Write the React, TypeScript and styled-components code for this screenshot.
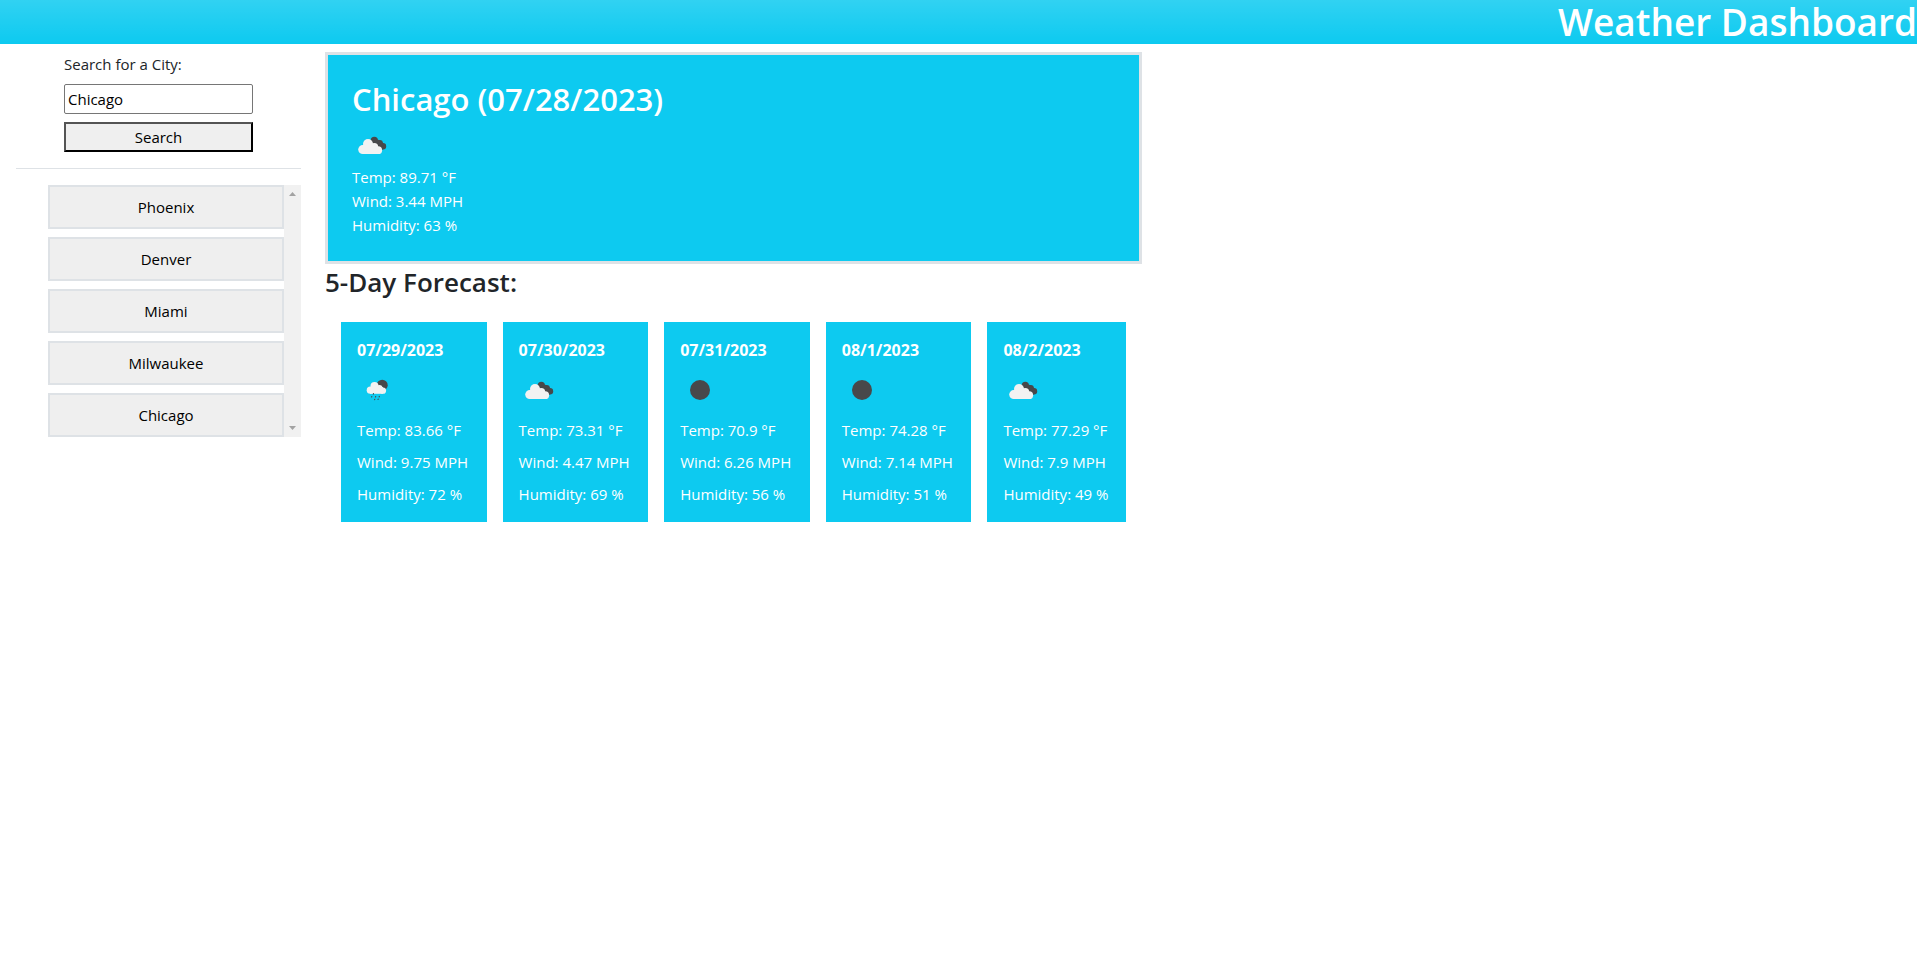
import React, { useState } from "react";
import styled, { createGlobalStyle } from "styled-components";

const GlobalStyle = createGlobalStyle`
  *, *::before, *::after { box-sizing: border-box; }
  body {
    margin: 0;
    background: #fff;
    color: #212529;
    font-family: "Segoe UI", "Open Sans", "Noto Sans", sans-serif;
    font-size: 15px;
    line-height: 24px;
  }
  h1, h2, h3, h4, p { margin: 0; }
`;

const Header = styled.header`
  display: flex;
  justify-content: flex-end;
  background: linear-gradient(180deg, rgba(255, 255, 255, 0.15), rgba(255, 255, 255, 0)) #0dcaf0;
`;

const Title = styled.h1`
  color: #fff;
  font-size: 37px;
  font-weight: 600;
  line-height: 44px;
  white-space: nowrap;
`;

const Layout = styled.div`
  display: flex;
  align-items: flex-start;
  gap: 24px;
  padding: 8px 16px;
`;

const Sidebar = styled.aside`
  flex: 0 0 285px;
`;

const SearchForm = styled.form`
  display: flex;
  flex-direction: column;
  gap: 8px;
  padding: 0 48px 16px;
`;

const SearchInput = styled.input`
  width: 100%;
  height: 30px;
  padding: 0 3px;
  border: 1px solid #767676;
  border-radius: 2px;
  background: #fff;
  color: #000;
  font: inherit;
`;

const SearchButton = styled.button`
  height: 30px;
  padding: 0;
  border: 2px outset #000;
  background: #efefef;
  color: #000;
  font: inherit;
`;

const History = styled.div`
  display: flex;
  margin-top: 16px;
  padding-left: 32px;
`;

const Divider = styled.hr`
  height: 1px;
  margin: 0;
  border: 0;
  background: #dee2e6;
`;

const CityList = styled.div`
  display: flex;
  flex: 1;
  flex-direction: column;
  gap: 8px;
`;

const CityButton = styled.button`
  height: 44px;
  border: 2px solid #dee2e6;
  background: #efefef;
  color: #000;
  font: inherit;
`;

const ScrollTrack = styled.div`
  display: flex;
  flex-direction: column;
  justify-content: space-between;
  width: 17px;
  background: #f1f1f1;
  svg { display: block; }
`;

const Main = styled.main`
  flex: 0 1 817px;
  min-width: 0;
`;

const Today = styled.section`
  padding: 24px;
  border: 3px solid #dee2e6;
  background: #0dcaf0;
  color: #fff;
`;

const TodayTitle = styled.h2`
  margin-bottom: 6px;
  font-size: 31px;
  font-weight: 600;
  line-height: 40px;
`;

const ForecastTitle = styled.h3`
  font-size: 26px;
  font-weight: 600;
  line-height: 36px;
`;

const Forecast = styled.div`
  display: grid;
  grid-template-columns: repeat(4, 146fr) 139fr;
  gap: 16px;
  padding: 22px 16px 16px;
`;

const DayCard = styled.article`
  display: flex;
  flex-direction: column;
  gap: 8px;
  padding: 16px;
  background: #0dcaf0;
  color: #fff;
  white-space: nowrap;
`;

const DayDate = styled.h4`
  font-size: 16px;
  font-weight: 700;
  line-height: 24px;
`;

const Picture = styled.svg`
  display: block;
  width: 40px;
  height: 40px;
`;

type Sky = "clouds" | "rain" | "clear";

function SkyIcon({ sky }: { sky: Sky }) {
  if (sky === "clear") {
    return (
      <Picture viewBox="0 0 40 40" role="img" aria-label="Clear sky">
        <circle cx="20" cy="20" r="10" fill="#48484a" />
      </Picture>
    );
  }
  if (sky === "rain") {
    return (
      <Picture viewBox="0 0 40 40" role="img" aria-label="Rain">
        <circle cx="25.2" cy="15.2" r="5.5" fill="#48484a" />
        <g fill="#f2f2f2">
          <circle cx="17.5" cy="16" r="4" />
          <circle cx="13.3" cy="20.2" r="3.6" />
          <circle cx="22.3" cy="18.3" r="3.2" />
          <circle cx="26" cy="20.7" r="3.1" />
          <rect x="13" y="17" width="13" height="6.8" />
        </g>
        <g stroke="#48484a" strokeWidth="1.1" strokeLinecap="round">
          <path d="M16.5 23.6l-.2.6M14.8 26.5l-.2.5M18.7 26.5l-.2.5M22.4 26.4l-.3.5M17.8 29.3l-.2.3M21.3 29.1l-.3.4" />
        </g>
      </Picture>
    );
  }
  return (
    <Picture viewBox="0 0 40 40" role="img" aria-label="Broken clouds">
      <g fill="#48484a">
        <circle cx="22.3" cy="15.4" r="3.6" />
        <circle cx="27.6" cy="18.4" r="3.4" />
        <circle cx="31" cy="21.2" r="3.2" />
        <path d="M23 13.500l5 2 4 4-1 4.900h-5l-6-6z" />
      </g>
      <g fill="#f2f2f2">
        <circle cx="16" cy="19" r="5" />
        <circle cx="10.7" cy="24.6" r="4.5" />
        <circle cx="22.2" cy="22" r="4" />
        <circle cx="26.2" cy="25.2" r="3.9" />
        <path d="M10.7 20h11l4.5 5v4.1H10.7z" />
      </g>
    </Picture>
  );
}

const cities = ["Phoenix", "Denver", "Miami", "Milwaukee", "Chicago"];

const days: { date: string; sky: Sky; temp: string; wind: string; humidity: string }[] = [
  { date: "07/29/2023", sky: "rain", temp: "83.66", wind: "9.75", humidity: "72" },
  { date: "07/30/2023", sky: "clouds", temp: "73.31", wind: "4.47", humidity: "69" },
  { date: "07/31/2023", sky: "clear", temp: "70.9", wind: "6.26", humidity: "56" },
  { date: "08/1/2023", sky: "clear", temp: "74.28", wind: "7.14", humidity: "51" },
  { date: "08/2/2023", sky: "clouds", temp: "77.29", wind: "7.9", humidity: "49" },
];

export default function App() {
  const [city, setCity] = useState("Chicago");
  return (
    <>
      <GlobalStyle />
      <Header>
        <Title>Weather Dashboard</Title>
      </Header>
      <Layout>
        <Sidebar>
          <SearchForm onSubmit={(e) => e.preventDefault()}>
            <label htmlFor="city">Search for a City:</label>
            <SearchInput id="city" value={city} onChange={(e) => setCity(e.target.value)} />
            <SearchButton type="submit">Search</SearchButton>
          </SearchForm>
          <Divider />
          <History>
            <CityList>
              {cities.map((name) => (
                <CityButton key={name} type="button" onClick={() => setCity(name)}>
                  {name}
                </CityButton>
              ))}
            </CityList>
            <ScrollTrack aria-hidden="true">
              <svg width="17" height="17" viewBox="0 0 17 17">
                <path d="M5 11h7L8.5 7z" fill="#a3a3a3" />
              </svg>
              <svg width="17" height="17" viewBox="0 0 17 17">
                <path d="M5 6h7l-3.500 4z" fill="#a3a3a3" />
              </svg>
            </ScrollTrack>
          </History>
        </Sidebar>
        <Main>
          <Today>
            <TodayTitle>Chicago (07/28/2023)</TodayTitle>
            <SkyIcon sky="clouds" />
            <p>Temp: 89.71 °F</p>
            <p>Wind: 3.44 MPH</p>
            <p>Humidity: 63 %</p>
          </Today>
          <ForecastTitle>5-Day Forecast:</ForecastTitle>
          <Forecast>
            {days.map((day) => (
              <DayCard key={day.date}>
                <DayDate>{day.date}</DayDate>
                <SkyIcon sky={day.sky} />
                <p>Temp: {day.temp} °F</p>
                <p>Wind: {day.wind} MPH</p>
                <p>Humidity: {day.humidity} %</p>
              </DayCard>
            ))}
          </Forecast>
        </Main>
      </Layout>
    </>
  );
}
